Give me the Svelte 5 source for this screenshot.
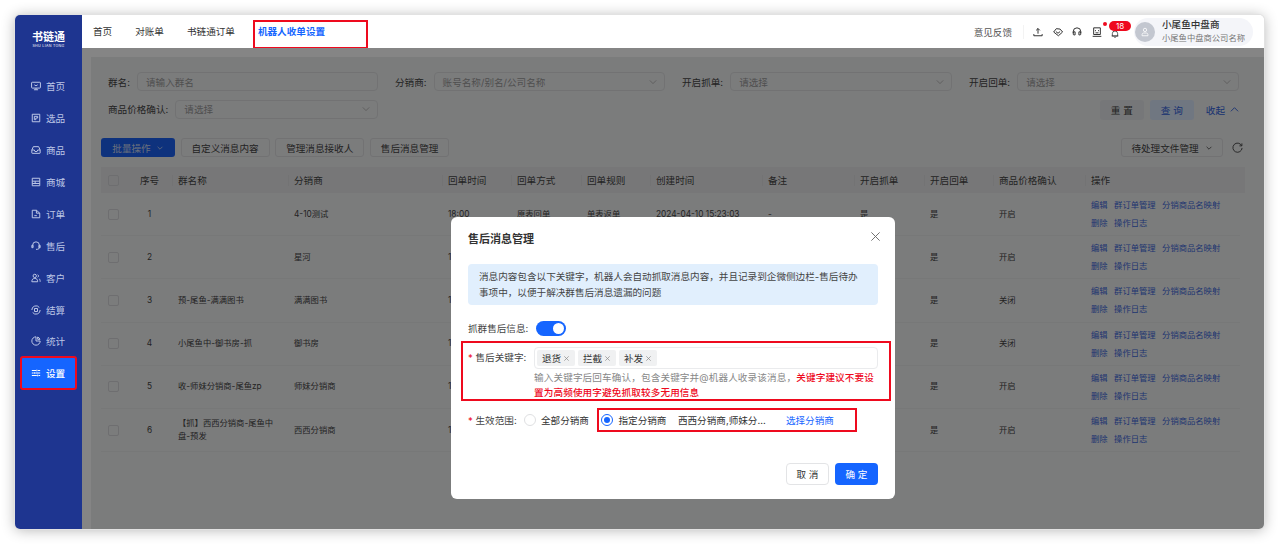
<script>
  const navItems = [
    { label: '首页', icon: 'home' }, { label: '选品', icon: 'pick' }, { label: '商品', icon: 'goods' },
    { label: '商城', icon: 'shop' }, { label: '订单', icon: 'order' }, { label: '售后', icon: 'service' },
    { label: '客户', icon: 'customer' }, { label: '结算', icon: 'settle' }, { label: '统计', icon: 'stats' },
    { label: '设置', icon: 'settings', active: true }
  ];
  const iconPaths = {
    home: 'M1.500 1.500h9a.8.8 0 0 1 .8.8v5.400a.8.8 0 0 1-.8.8h-9a.8.8 0 0 1-.8-.8V2.300a.8.8 0 0 1 .8-.8zM3.500 10.500h5M6 8.500v2M4 4.500c.8 1.400 3.200 1.400 4 0',
    pick: 'M1.500 1.500h9v9h-9zM4 4h4v2H5.800v2H4z',
    goods: 'M2.800 2h6.400L11 6v3.500a.5.5 0 0 1-.5.5h-9a.5.5 0 0 1-.5-.5V6zM1 6h3a2 2 0 0 0 4 0h3',
    shop: 'M1.500 1.500h9v9h-9zM1.500 5h9M1.500 7.800h9M5 5v2.800',
    order: 'M1.500 1.500h5l4 3.500v5.500h-9zM6.500 1.500V5h4M4 8h3',
    service: 'M2 6.800V5a4 4 0 0 1 8 0v2.500a2.500 2.500 0 0 1-2.500 2.500H6M1 5.200h1.500v2.800H1zM9.500 5.200H11V8H9.500z',
    customer: 'M4.500 1.500a2 2 0 1 1 0 4 2 2 0 0 1 0-4zM1 10.500c0-3 1.500-4 3.500-4s3.500 1 3.500 4zM8 2a1.800 1.800 0 0 1 0 3.200M9.500 6.800c1 .5 1.500 1.500 1.500 3.700',
    settle: 'M1 6a5 5 0 0 1 9-3M11 6a5 5 0 0 1-9 3M4.200 4.200h3.600v3.600H4.200z',
    stats: 'M6 1a5 5 0 1 0 5 5H6zM8 1.200A5 5 0 0 1 10.800 4H8z',
    settings: 'M1 3h5M8 3h3M1 6h2M5 6h6M1 9h6M9 9h2M7 2v2M4 5v2M8 8v2'
  };
  const filters = [
    { label: '群名', placeholder: '请输入群名', arrow: false },
    { label: '分销商', placeholder: '账号名称/别名/公司名称', arrow: true },
    { label: '开启抓单', placeholder: '请选择', arrow: true },
    { label: '开启回单', placeholder: '请选择', arrow: true },
    { label: '商品价格确认', placeholder: '请选择', arrow: true }
  ];
  const columns = ['序号','群名称','分销商','回单时间','回单方式','回单规则','创建时间','备注','开启抓单','开启回单','商品价格确认','操作'];
  const rows = [
    { no: 1, name: '', dist: '4-10测试', price: '开启' },
    { no: 2, name: '', dist: '星河', price: '开启' },
    { no: 3, name: '预-尾鱼-满满图书', dist: '满满图书', price: '关闭' },
    { no: 4, name: '小尾鱼中-御书房-抓', dist: '御书房', price: '关闭' },
    { no: 5, name: '收-师妹分销商-尾鱼zp', dist: '师妹分销商', price: '开启' },
    { no: 6, name: '【抓】西西分销商-尾鱼中盘-预发', dist: '西西分销商', price: '开启' }
  ];
  const tags = ['退货', '拦截', '补发'];
</script>

<div class="page">
  <div class="window">
    <aside class="sidebar">
      <div class="logo">
        <div class="logo-cn">书链通</div>
        <div class="logo-en">SHU LIAN TONG</div>
      </div>
      <nav class="side-nav">
        {#each navItems as item}
          <div class="side-item" class:active={item.active}>
            <svg class="side-icon" viewBox="0 0 12 12"><path d={iconPaths[item.icon]} /></svg>
            <span>{item.label}</span>
          </div>
        {/each}
      </nav>
    </aside>

    <div class="main">
      <header class="topbar">
        <div class="tabs">
          <span class="tab">首页</span>
          <span class="tab">对账单</span>
          <span class="tab">书链通订单</span>
          <span class="tab current">机器人收单设置</span>
        </div>
        <div class="tools">
          <span class="feedback">意见反馈</span>
          <span class="divider"></span>
          <svg class="tool" viewBox="0 0 12 12"><path d="M6 8V1.800M3.800 4L6 1.800 8.200 4M1 8.500V10.500h10V8.500" /></svg>
          <svg class="tool" viewBox="0 0 12 12"><path d="M4 2l4.500.5 3 3.500-5 4.500L.8 6zM3.500 5.500l2.500 2 2.500-2" /></svg>
          <svg class="tool" viewBox="0 0 12 12"><path d="M1.500 7V5.500a4.500 4.500 0 0 1 9 0V7M1.500 5.800h2.200v3.700H2.500a1 1 0 0 1-1-1zM10.500 5.800H8.300v3.700h1.200a1 1 0 0 0 1-1z" /></svg>
          <span class="tool-wrap">
            <svg class="tool" viewBox="0 0 12 12"><path d="M2 1h8v8H2zM.8 11.200h10.400M4.200 3.800v1.200M7.800 3.800v1.200M4.200 7h3.600" /></svg>
            <i class="dot"></i>
          </span>
          <span class="tool-wrap bell">
            <svg class="tool" viewBox="0 0 12 12"><path d="M2 9V5.500a4 4 0 0 1 8 0V9zM1 9h10M5 11.200h2" /></svg>
            <b class="badge">18</b>
          </span>
          <div class="user">
            <span class="avatar">
              <svg viewBox="0 0 12 12"><path d="M6 1.500a2 2 0 1 1 0 4 2 2 0 0 1 0-4zM2.500 10.500V9c0-1 1-1.800 2-1.800h3c1 0 2 .8 2 1.800v1.500z" /></svg>
            </span>
            <div class="user-text">
              <div class="user-name">小尾鱼中盘商</div>
              <div class="user-company">小尾鱼中盘商公司名称</div>
            </div>
          </div>
        </div>
      </header>

      <section class="content">
        <div class="card">
          <div class="filters">
            {#each filters as f}
              <div class="filter">
                <span class="filter-label">{f.label}:</span>
                <div class="input">
                  <span>{f.placeholder}</span>
                  {#if f.arrow}
                    <svg class="chev" viewBox="0 0 10 10"><path d="M1 3l4 4 4-4" /></svg>
                  {/if}
                </div>
              </div>
            {/each}
            <div class="filter-actions">
              <button class="btn-reset">重 置</button>
              <button class="btn-query">查 询</button>
              <span class="collapse">收起
                <svg viewBox="0 0 10 10"><path d="M1 7l4-4 4 4" /></svg>
              </span>
            </div>
          </div>

          <div class="toolbar">
            <button class="btn-batch">批量操作
              <svg viewBox="0 0 10 10"><path d="M2 3.500l3 3 3-3" /></svg>
            </button>
            <button class="btn">自定义消息内容</button>
            <button class="btn">管理消息接收人</button>
            <button class="btn">售后消息管理</button>
            <div class="toolbar-end">
              <button class="btn btn-files">待处理文件管理
                <svg viewBox="0 0 10 10"><path d="M2 3.500l3 3 3-3" /></svg>
              </button>
              <svg class="refresh" viewBox="0 0 12 12"><path d="M10.500 4A5 5 0 1 0 11 6.500M10.800 1.500V4.200H8.100" /></svg>
            </div>
          </div>

          <div class="table">
            <div class="thead">
              <div class="cell check"><i class="checkbox"></i></div>
              {#each columns as c, i}
                <div class="cell th" class:center={i === 0} class:sep={i > 0}>{c}</div>
              {/each}
            </div>
            {#each rows as r}
              <div class="trow">
                <div class="cell check"><i class="checkbox"></i></div>
                <div class="cell center">{r.no}</div>
                <div class="cell name">{r.name}</div>
                <div class="cell">{r.dist}</div>
                <div class="cell">18:00</div>
                {#if r.no === 1}
                  <div class="cell">原表回单</div>
                  <div class="cell">单表返单</div>
                  <div class="cell">2024-04-10 15:23:03</div>
                  <div class="cell">-</div>
                  <div class="cell">是</div>
                {:else}
                  <div class="cell"></div>
                  <div class="cell"></div>
                  <div class="cell"></div>
                  <div class="cell"></div>
                  <div class="cell"></div>
                {/if}
                <div class="cell">是</div>
                <div class="cell">{r.price}</div>
                <div class="cell ops">
                  <span>编辑</span><span>群订单管理</span><span>分销商品名映射</span><span>删除</span><span>操作日志</span>
                </div>
              </div>
            {/each}
          </div>
        </div>
        <div class="scrim"></div>
      </section>
    </div>

    <div class="modal">
      <div class="modal-head">
        <h2>售后消息管理</h2>
        <svg class="close" viewBox="0 0 12 12"><path d="M1.500 1.500l9 9M10.500 1.500l-9 9" /></svg>
      </div>
      <div class="alert">消息内容包含以下关键字，机器人会自动抓取消息内容，并且记录到企微侧边栏-售后待办事项中，以便于解决群售后消息遗漏的问题</div>
      <div class="switch-row">
        <span class="form-label">抓群售后信息:</span>
        <span class="switch"><i></i></span>
      </div>
      <div class="keyword-box">
        <span class="form-label req"><em>*</em> 售后关键字:</span>
        <div class="keyword-field">
          <div class="tags">
            {#each tags as t}
              <span class="tag">{t}
                <svg viewBox="0 0 8 8"><path d="M1.500 1.500l5 5M6.500 1.500l-5 5" /></svg>
              </span>
            {/each}
          </div>
          <p class="help">输入关键字后回车确认，包含关键字并@机器人收录该消息，<strong>关键字建议不要设</strong><br /><strong>置为高频使用字避免抓取较多无用信息</strong></p>
        </div>
      </div>
      <div class="scope-row">
        <span class="form-label req"><em>*</em> 生效范围:</span>
        <span class="radio"></span>
        <span class="radio-text">全部分销商</span>
        <div class="scope-box">
          <span class="radio on"></span>
          <span class="radio-text">指定分销商</span>
          <span class="scope-names">西西分销商,师妹分...</span>
          <span class="scope-link">选择分销商</span>
        </div>
      </div>
      <div class="modal-foot">
        <button class="btn-cancel">取 消</button>
        <button class="btn-ok">确 定</button>
      </div>
    </div>
  </div>
</div>

<style>
  :global(body) {
    margin: 0;
    background: #fff;
    font-family: Inter, "Noto Sans CJK SC", sans-serif;
  }
  button {
    font-family: inherit;
    cursor: pointer;
  }
  .page {
    box-sizing: border-box;
    width: 1280px;
    height: 545px;
    padding: 15px 16px 16px 15px;
    overflow: hidden;
  }
  .window {
    position: relative;
    display: flex;
    height: 514px;
    border-radius: 5px;
    overflow: hidden;
    box-shadow: 0 0 0 1px #e2e2e2, 0 1px 14px rgba(0, 0, 0, 0.3);
  }
  .sidebar {
    flex: 0 0 67px;
    background: #1e3590;
    color: #bcc6e6;
  }
  .logo {
    height: 50px;
    padding-top: 16px;
    box-sizing: border-box;
    text-align: center;
    color: #fff;
  }
  .logo-cn {
    font-size: 11px;
    font-weight: 700;
    line-height: 12px;
  }
  .logo-en {
    margin-top: 1px;
    font-size: 3.600px;
    line-height: 5px;
    letter-spacing: 0.300px;
  }
  .side-nav {
    display: flex;
    flex-direction: column;
    margin-top: 5.400px;
    padding: 0 6px;
  }
  .side-item {
    display: flex;
    align-items: center;
    gap: 5px;
    height: 31.900px;
    padding-left: 10px;
    font-size: 9.600px;
  }
  .side-icon {
    width: 10px;
    height: 10px;
    fill: none;
    stroke: currentColor;
    stroke-width: 1.200;
  }
  .side-item.active {
    color: #fff;
    background: #1565ff;
    border-radius: 2px;
    outline: 2px solid #ee0a1e;
    outline-offset: -1px;
    font-weight: 500;
  }
  .main {
    flex: 1;
    min-width: 0;
    display: flex;
    flex-direction: column;
  }
  .topbar {
    flex: 0 0 33px;
    display: flex;
    align-items: center;
    justify-content: space-between;
    background: #fff;
    font-size: 9.600px;
    color: #333;
  }
  .tabs {
    display: flex;
    align-items: stretch;
    height: 27px;
    align-self: flex-end;
    padding-left: 11px;
  }
  .tab {
    margin-right: 23px;
    padding-top: 4px;
    line-height: 13px;
  }
  .tab.current {
    margin-left: -4px;
    width: 109px;
    padding-left: 4px;
    color: #1565ff;
    font-weight: 700;
    outline: 2px solid #ee0a1e;
    outline-offset: -1px;
  }
  .tools {
    display: flex;
    align-items: center;
    padding-right: 11px;
  }
  .feedback {
    color: #555;
  }
  .divider {
    width: 1px;
    height: 14px;
    margin: 0 9.500px 0 10.500px;
    background: #f3f3f3;
  }
  .tool {
    display: block;
    width: 10px;
    height: 10px;
    margin-right: 9.500px;
    fill: none;
    stroke: #2b2b2b;
    stroke-width: 1.150;
  }
  .tool-wrap {
    position: relative;
  }
  .tool-wrap.bell .tool {
    width: 8px;
    height: 8px;
    margin: 4px 15px 0 0;
  }
  .dot {
    position: absolute;
    top: -5px;
    right: 4.500px;
    width: 4px;
    height: 4px;
    border-radius: 50%;
    background: #ee0a1e;
  }
  .badge {
    position: absolute;
    top: -4.500px;
    left: -2px;
    width: 22px;
    height: 10px;
    border-radius: 5px;
    background: #ee0a1e;
    color: #fff;
    font-size: 8px;
    font-weight: 400;
    line-height: 10px;
    text-align: center;
  }
  .user {
    display: flex;
    align-items: center;
    gap: 7px;
    width: 119px;
    height: 28px;
    box-sizing: border-box;
    border-radius: 14px;
    background: #f4f5f9;
  }
  .avatar {
    display: flex;
    align-items: center;
    justify-content: center;
    width: 20px;
    height: 20px;
    margin-left: 1px;
    border-radius: 50%;
    background: #c3c7d0;
  }
  .avatar svg {
    width: 10px;
    height: 10px;
    fill: none;
    stroke: #fff;
    stroke-width: 1;
  }
  .user-name {
    font-size: 9.600px;
    line-height: 14px;
    color: #333;
    font-weight: 500;
  }
  .user-company {
    font-size: 8.300px;
    line-height: 13px;
    color: #777;
  }
  .content {
    position: relative;
    flex: 1;
    min-height: 0;
    padding: 9px 0 0 9px;
    background: #fff;
  }
  .scrim {
    position: absolute;
    inset: 0;
    background: rgba(0, 0, 0, 0.48);
  }
  .card {
    height: 100%;
    padding: 15px 19px 0 10px;
    box-sizing: border-box;
    background: #ecedee;
    color: #444;
    font-size: 8.300px;
  }
  .filters {
    display: grid;
    grid-template-columns: repeat(4, 270px);
    column-gap: 17px;
    row-gap: 8.500px;
    padding-left: 7px;
  }
  .filter {
    display: flex;
    align-items: center;
    height: 19px;
    font-size: 9.600px;
  }
  .filter-label {
    white-space: nowrap;
    margin-right: 7px;
  }
  .input {
    flex: 1;
    display: flex;
    align-items: center;
    justify-content: space-between;
    height: 100%;
    padding: 0 7px 0 8px;
    box-sizing: border-box;
    border: 1px solid #dadbdd;
    border-radius: 4px;
    color: #999;
  }
  .chev {
    width: 8px;
    height: 8px;
    fill: none;
    stroke: #aaa;
    stroke-width: 1;
  }
  .filter-actions {
    grid-column: 3 / 5;
    display: flex;
    align-items: center;
    justify-content: flex-end;
    gap: 6px;
    font-size: 9.600px;
  }
  .filter-actions button {
    width: 44px;
    height: 20px;
    border: 0;
    border-radius: 3px;
    font-size: 9.600px;
    padding: 0;
  }
  .btn-reset {
    background: #e3e5e8;
    color: #444;
  }
  .btn-query {
    background: #d7e4f7;
    color: #3060d8;
  }
  .collapse {
    display: inline-flex;
    align-items: center;
    gap: 5px;
    margin-left: 6px;
    color: #3060d8;
  }
  .collapse svg {
    width: 9px;
    height: 9px;
    fill: none;
    stroke: currentColor;
    stroke-width: 1;
  }
  .toolbar {
    display: flex;
    align-items: center;
    gap: 5.500px;
    height: 19px;
    margin-top: 18.500px;
    font-size: 9.600px;
  }
  .toolbar button {
    height: 19px;
    border-radius: 3px;
    font-size: 9.600px;
  }
  .btn-batch {
    display: inline-flex;
    align-items: center;
    justify-content: center;
    gap: 5px;
    width: 74px;
    padding: 0;
    border: 0;
    background: #1b60f0;
    color: #c9d5ee;
  }
  .btn-batch svg,
  .btn-files svg {
    width: 8px;
    height: 8px;
    fill: none;
    stroke: currentColor;
    stroke-width: 1;
  }
  .btn {
    padding: 0 10px;
    background: transparent;
    border: 1px solid #dadbdd;
    color: #444;
  }
  .toolbar-end {
    display: flex;
    align-items: center;
    margin-left: auto;
    margin-right: 2px;
  }
  .btn-files {
    display: inline-flex;
    align-items: center;
    justify-content: center;
    gap: 6px;
    width: 102px;
    padding: 0;
    margin-right: 9px;
  }
  .refresh {
    width: 11px;
    height: 11px;
    fill: none;
    stroke: #444;
    stroke-width: 1;
  }
  .table {
    margin-top: 10px;
  }
  .thead,
  .trow {
    display: grid;
    grid-template-columns: 28px 43px 116px 154px 69px 70px 69px 112px 92px 70px 69px 92px 160px;
    align-items: center;
  }
  .thead {
    height: 26px;
    background: #e4e5e6;
    font-size: 9.600px;
  }
  .trow {
    width: 1139px;
    grid-template-columns: 28px 43px 116px 154px 69px 70px 69px 112px 92px 70px 69px 92px 155px;
    height: 43.200px;
    box-sizing: border-box;
    border-bottom: 1px solid #e5e6e7;
  }
  .cell {
    padding-left: 6px;
    line-height: 13px;
    min-width: 0;
  }
  .th {
    position: relative;
  }
  .th.sep::before {
    content: "";
    position: absolute;
    left: 0;
    top: 1px;
    bottom: 1px;
    width: 1px;
    background: #dcdddf;
  }
  .cell.center {
    padding-left: 0;
    padding-right: 2px;
    text-align: center;
  }
  .cell.check {
    padding-left: 7px;
  }
  .checkbox {
    display: block;
    width: 9px;
    height: 9px;
    border: 1px solid #d3d4d6;
    border-radius: 2px;
  }
  .cell.name {
    padding-right: 14px;
  }
  .ops {
    display: flex;
    flex-wrap: wrap;
    column-gap: 6.500px;
    width: 140px;
    color: #3d68d8;
    line-height: 18px;
  }
  .modal {
    position: absolute;
    left: 436px;
    top: 202px;
    width: 444px;
    height: 282px;
    box-sizing: border-box;
    padding: 0 17px;
    border-radius: 6px;
    background: #fff;
    color: #333;
    font-size: 9.600px;
  }
  .modal-head {
    display: flex;
    justify-content: space-between;
    height: 47px;
    padding-top: 15px;
    box-sizing: border-box;
  }
  h2 {
    margin: 0;
    font-size: 11px;
    font-weight: 600;
    line-height: 14px;
  }
  .close {
    width: 11px;
    height: 11px;
    margin: -1px -3px 0 0;
    fill: none;
    stroke: #666;
    stroke-width: 1;
  }
  .alert {
    height: 41px;
    box-sizing: border-box;
    padding: 5px 11px;
    border-radius: 4px;
    background: #e1effd;
    color: #444;
    line-height: 16px;
  }
  .switch-row {
    display: flex;
    align-items: center;
    gap: 8px;
    height: 16px;
    margin-top: 15px;
  }
  .form-label {
    color: #444;
    white-space: nowrap;
  }
  .form-label em {
    color: #ee0a1e;
    font-style: normal;
  }
  .switch {
    display: block;
    position: relative;
    width: 30px;
    height: 15px;
    border-radius: 8px;
    background: #1565ff;
  }
  .switch i {
    position: absolute;
    top: 2px;
    right: 2px;
    width: 11px;
    height: 11px;
    border-radius: 50%;
    background: #fff;
  }
  .keyword-box {
    display: flex;
    margin: 5px -13px 0 -7px;
    padding: 4px 11px 0 5px;
    height: 60px;
    box-sizing: border-box;
    border: 2px solid #ee0a1e;
  }
  .keyword-box .form-label {
    flex: 0 0 66px;
    padding-top: 4px;
    line-height: 13px;
  }
  .keyword-field {
    flex: 1;
    min-width: 0;
  }
  .tags {
    display: flex;
    gap: 3px;
    height: 22px;
    padding: 2px;
    box-sizing: border-box;
    border: 1px solid #eaebed;
    border-radius: 4px;
  }
  .tag {
    display: inline-flex;
    align-items: center;
    justify-content: center;
    gap: 2px;
    width: 38px;
    height: 16px;
    border-radius: 2px;
    background: #f0f1f2;
    color: #333;
  }
  .tag svg {
    width: 7px;
    height: 7px;
    fill: none;
    stroke: #888;
    stroke-width: 0.800;
  }
  .help {
    margin: 0;
    padding-top: 0.500px;
    font-size: 9.600px;
    line-height: 15px;
    letter-spacing: 0.130px;
    white-space: nowrap;
    color: #888;
  }
  .help strong {
    color: #ee0a1e;
    font-weight: 500;
  }
  .scope-row {
    display: flex;
    align-items: center;
    height: 24px;
    margin-top: 7px;
  }
  .scope-row .form-label {
    width: 56px;
  }
  .radio {
    flex: none;
    width: 10px;
    height: 10px;
    border: 1px solid #dfe0e2;
    border-radius: 50%;
  }
  .radio.on {
    position: relative;
    border-color: #1565ff;
  }
  .radio.on::after {
    content: "";
    position: absolute;
    inset: 2px;
    border-radius: 50%;
    background: #1565ff;
  }
  .radio-text {
    margin-left: 5px;
  }
  .scope-box {
    display: flex;
    align-items: center;
    width: 260px;
    height: 24px;
    margin-left: 8px;
    padding-left: 2.500px;
    box-sizing: border-box;
    border: 2px solid #ee0a1e;
  }
  .scope-names {
    margin-left: 11.500px;
    width: 108px;
  }
  .scope-link {
    color: #1565ff;
  }
  .modal-foot {
    display: flex;
    justify-content: flex-end;
    gap: 6px;
    margin-top: 31px;
  }
  .modal-foot button {
    width: 43px;
    height: 22px;
    padding: 0;
    border-radius: 4px;
    font-size: 9.600px;
  }
  .btn-cancel {
    background: #fff;
    border: 1px solid #e3e4e6;
    color: #333;
  }
  .btn-ok {
    background: #1565ff;
    border: 0;
    color: #fff;
  }
</style>
